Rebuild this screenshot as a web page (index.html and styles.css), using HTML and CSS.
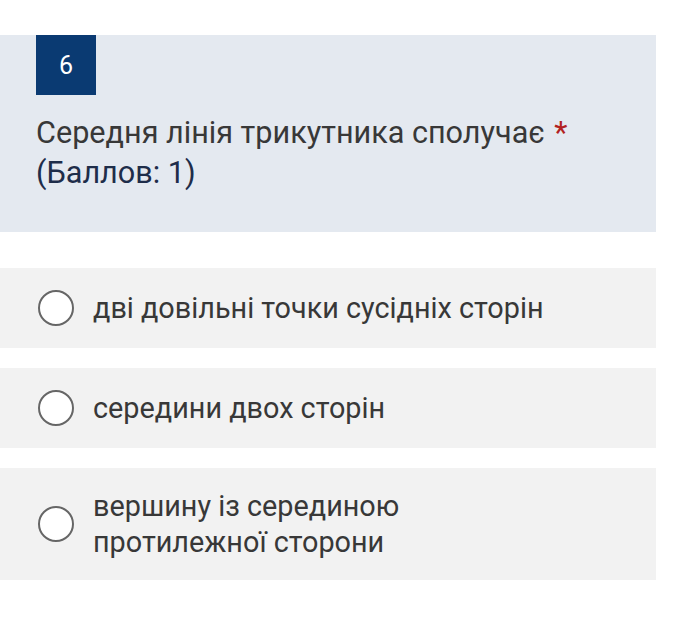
FILE: index.html
```html
<!DOCTYPE html>
<html lang="uk">
<head>
    <meta charset="UTF-8">
    <meta name="viewport" content="width=device-width, initial-scale=1.0">
    <title>Питання 6</title>
    <link rel="stylesheet" href="styles.css">
</head>
<body>
    <div class="form">
        <div class="question">
            <div class="number">6</div>
            <div class="title">
                Середня лінія трикутника сполучає <span class="required">*</span><br>
                <span class="points">(Баллов: 1)</span>
            </div>
        </div>
        <label class="option">
            <span class="radio"></span>
            <span class="option-text">дві довільні точки сусідніх сторін</span>
        </label>
        <label class="option">
            <span class="radio"></span>
            <span class="option-text">середини двох сторін</span>
        </label>
        <label class="option">
            <span class="radio"></span>
            <span class="option-text">вершину із серединою<br>протилежної сторони</span>
        </label>
    </div>
</body>
</html>
```

FILE: styles.css
```css
body {
    margin: 0;
    padding: 35px 0 0;
    background-color: white;
    font-family: Roboto, "Noto Sans", sans-serif;
    color: #333;
}
.form {
    width: 656px;
}
.question {
    background-color: #e4e9f0;
    padding: 0 36px 39px;
    margin-bottom: 36px;
}
.number {
    width: 60px;
    height: 60px;
    background-color: #0a3a72;
    color: white;
    font-size: 25px;
    display: flex;
    align-items: center;
    justify-content: center;
}
.title {
    margin-top: 18px;
    font-size: 30.6px;
    line-height: 40px;
    color: #383838;
}
.required {
    margin-left: 2px;
    color: #b22222;
}
.points {
    color: #1e2d4a;
}
.option {
    display: flex;
    align-items: center;
    gap: 19px;
    background-color: #f2f2f2;
    padding: 20px 38px;
    min-height: 40px;
    margin-bottom: 20px;
}
.radio {
    flex: none;
    width: 32px;
    height: 32px;
    border: 2px solid #666;
    border-radius: 50%;
    background-color: white;
}
.option-text {
    font-size: 28.8px;
    line-height: 36px;
    color: #383838;
}
```
